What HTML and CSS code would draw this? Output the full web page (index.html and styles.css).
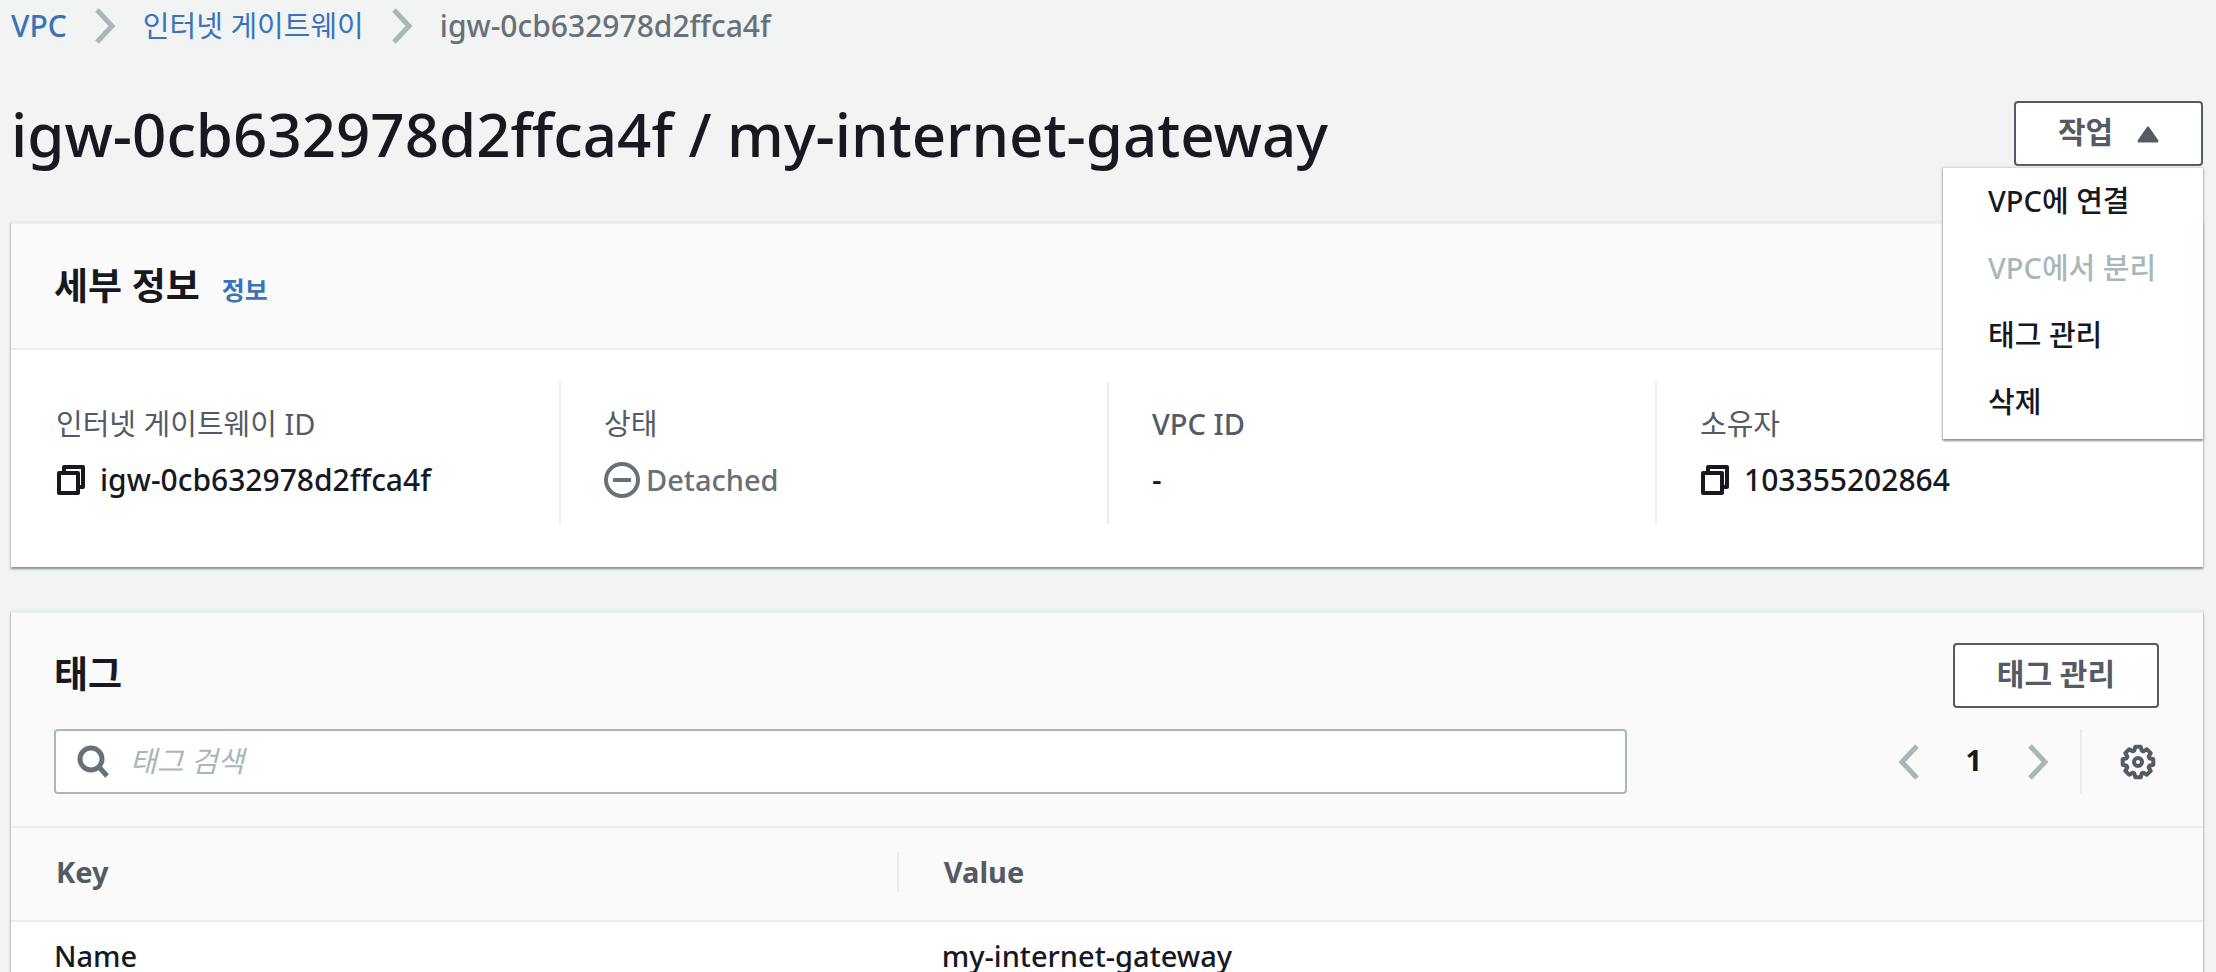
FILE: index.html
```html
<!DOCTYPE html>
<html lang="ko">
<head>
    <meta charset="UTF-8">
    <title>igw-0cb632978d2ffca4f | VPC</title>
    <link rel="stylesheet" href="styles.css">
</head>
<body>
    <nav class="breadcrumb">
        <a class="latin" href="#">VPC</a>
        <svg class="chevron" viewBox="0 0 20 36"><path d="M2 2l15 16-15 16"/></svg>
        <a href="#">인터넷 게이트웨이</a>
        <svg class="chevron" viewBox="0 0 20 36"><path d="M2 2l15 16-15 16"/></svg>
        <span class="latin">igw-0cb632978d2ffca4f</span>
    </nav>

    <header class="page-header">
        <h1>igw-0cb632978d2ffca4f / my-internet-gateway</h1>
        <div class="dropdown">
            <button class="btn" aria-expanded="true">작업
                <svg class="caret" viewBox="0 0 22 17"><path d="M11 2l9 13H2z"/></svg>
            </button>
            <div class="menu">
                <button>VPC에 연결</button>
                <button disabled>VPC에서 분리</button>
                <button>태그 관리</button>
                <button>삭제</button>
            </div>
        </div>
    </header>

    <section class="panel">
        <div class="panel-header">
            <h2>세부 정보</h2>
            <a class="info" href="#">정보</a>
        </div>
        <div class="details">
            <div class="detail">
                <div class="label">인터넷 게이트웨이 ID</div>
                <div class="value">
                    <svg class="copy" viewBox="0 0 30 32"><path d="M8 8V3h19v20h-5M3 9h19v20H3z"/></svg>
                    <span>igw-0cb632978d2ffca4f</span>
                </div>
            </div>
            <div class="detail">
                <div class="label">상태</div>
                <div class="value status">
                    <svg class="detached" viewBox="0 0 36 36"><circle cx="18" cy="18" r="16"/><path d="M9 18h18"/></svg>
                    <span>Detached</span>
                </div>
            </div>
            <div class="detail">
                <div class="label vpc">VPC ID</div>
                <div class="value">-</div>
            </div>
            <div class="detail">
                <div class="label">소유자</div>
                <div class="value">
                    <svg class="copy" viewBox="0 0 30 32"><path d="M8 8V3h19v20h-5M3 9h19v20H3z"/></svg>
                    <span>103355202864</span>
                </div>
            </div>
        </div>
    </section>

    <section class="panel">
        <div class="tags-header">
            <div class="tags-title">
                <h2>태그</h2>
                <button class="btn">태그 관리</button>
            </div>
            <div class="tools">
                <label class="search">
                    <svg viewBox="0 0 32 36"><circle cx="14" cy="15" r="11"/><path d="M22 23l8 9"/></svg>
                    <input type="search" placeholder="태그 검색" aria-label="태그 검색">
                </label>
                <div class="pager">
                    <button class="icon-btn" aria-label="이전" disabled><svg class="chevron" viewBox="0 0 20 36"><path d="M18 2L3 18l15 16"/></svg></button>
                    <span class="page">1</span>
                    <button class="icon-btn" aria-label="다음" disabled><svg class="chevron" viewBox="0 0 20 36"><path d="M2 2l15 16L2 34"/></svg></button>
                </div>
                <button class="icon-btn settings" aria-label="설정">
                    <svg class="gear" viewBox="0 0 36 36">
                        <path d="M15.300 2.700L20.700 2.700 21.700 6.600 23.400 7.300 26.900 5.300 30.700 9.100 28.700 12.600 29.400 14.300 33.300 15.300 33.300 20.700 29.400 21.700 28.700 23.400 30.700 26.900 26.900 30.700 23.400 28.700 21.700 29.400 20.700 33.300 15.300 33.300 14.300 29.400 12.600 28.700 9.100 30.700 5.300 26.900 7.300 23.400 6.600 21.700 2.700 20.700 2.700 15.300 6.600 14.300 7.300 12.600 5.300 9.100 9.100 5.300 12.600 7.300 14.300 6.600z"/>
                        <circle cx="18" cy="18" r="4"/>
                    </svg>
                </button>
            </div>
        </div>
        <table>
            <thead>
                <tr><th class="key"><div>Key</div></th><th>Value</th></tr>
            </thead>
            <tbody>
                <tr><td>Name</td><td>my-internet-gateway</td></tr>
            </tbody>
        </table>
    </section>
</body>
</html>
```

FILE: styles.css
```css
* {
    box-sizing: border-box;
}
body {
    margin: 0;
    padding: 4px 13px 0 11px;
    background: #f2f3f3;
    color: #16191f;
    font-family: "Noto Sans", "Noto Sans CJK KR", sans-serif;
    font-size: 29px;
    line-height: 44px;
    overflow: hidden;
}
h1, h2 {
    margin: 0;
}
a {
    color: #3b73bb;
    text-decoration: none;
}
button, input {
    font: inherit;
    color: inherit;
}
svg {
    fill: none;
    stroke: currentColor;
    flex: none;
}
.latin {
    font-size: 30px;
    font-weight: 500;
}
.breadcrumb {
    display: flex;
    align-items: center;
    gap: 28px;
    color: #687078;
}
.chevron {
    width: 20px;
    height: 36px;
    stroke: #aab7b8;
    stroke-width: 5;
}
.page-header {
    display: flex;
    justify-content: space-between;
    align-items: flex-start;
    padding-top: 53px;
    height: 174px;
}
h1 {
    font-size: 60px;
    font-weight: 500;
    line-height: 66px;
}
.btn {
    height: 65px;
    padding: 0 42px 3px;
    background: #fff;
    border: 2px solid #545b64;
    border-radius: 4px;
    color: #545b64;
    font-size: 30px;
    font-weight: bold;
    line-height: 40px;
}
.caret {
    width: 22px;
    height: 17px;
    margin-left: 16px;
    fill: currentColor;
    stroke-width: 3;
    stroke-linejoin: round;
}
.dropdown {
    position: relative;
}
.menu {
    position: absolute;
    top: 100%;
    right: 0;
    width: 260px;
    margin-top: 2px;
    padding-bottom: 3px;
    background: #fff;
    box-shadow: 0 2px 2px #879596, 0 0 2px 1px #ccd2d2;
}
.menu button {
    display: block;
    width: 100%;
    height: 67px;
    padding: 0 45px 2px;
    border: none;
    background: none;
    text-align: left;
    white-space: nowrap;
    font-weight: 500;
}
.menu button:disabled {
    color: #aab7b8;
}
.panel {
    margin-bottom: 44px;
    background: #fff;
    border-top: 2px solid #eaeded;
    box-shadow: 0 2px 2px #879596, 0 1px 2px 1px #d5dbdb;
}
.panel-header {
    display: flex;
    align-items: baseline;
    gap: 22px;
    padding: 42px 43px 38px;
    background: #fafafa;
    border-bottom: 2px solid #eaeded;
}
h2 {
    font-size: 37px;
    font-weight: bold;
}
.panel-header h2, .info {
    line-height: 40px;
}
.info {
    font-size: 25px;
    font-weight: bold;
}
.details {
    display: grid;
    grid-template-columns: repeat(4, 1fr);
    padding: 32px 0 43px;
}
.detail {
    height: 142px;
    padding: 20px 43px;
    border-left: 2px solid #eaeded;
}
.detail:first-child {
    border-color: transparent;
}
.label {
    height: 56px;
    color: #545b64;
}
.vpc {
    font-weight: 500;
}
.value {
    display: flex;
    align-items: center;
    gap: 14px;
    font-size: 30px;
    font-weight: 500;
}
.status {
    gap: 6px;
    color: #687078;
    font-size: 29px;
}
.copy {
    width: 30px;
    height: 32px;
    stroke-width: 4;
    stroke-linejoin: round;
}
.detached {
    width: 36px;
    height: 36px;
    stroke-width: 4;
}
.tags-header {
    padding: 30px 44px 32px 43px;
    background: #fafafa;
    border-bottom: 2px solid #eaeded;
}
.tags-title {
    display: flex;
    justify-content: space-between;
    margin-bottom: 21px;
}
.tags-title h2 {
    line-height: 62px;
}
.tools {
    display: flex;
    align-items: center;
}
.search {
    display: flex;
    align-items: center;
    flex: 1;
    height: 65px;
    padding-left: 21px;
    gap: 21px;
    background: #fff;
    border: 2px solid #aab7b8;
    border-radius: 4px;
}
.search svg {
    width: 32px;
    height: 36px;
    color: #687078;
    stroke-width: 5;
}
.search input {
    flex: 1;
    padding: 0 0 2px;
    border: none;
    outline: none;
    background: none;
}
.search input::placeholder {
    color: #aab7b8;
    font-style: italic;
    opacity: 1;
}
.pager {
    display: flex;
    align-items: center;
    gap: 46px;
    margin-left: 272px;
    padding-right: 32px;
}
.page {
    font-weight: bold;
    line-height: 48px;
    padding-bottom: 4px;
}
.icon-btn {
    display: flex;
    align-items: center;
    padding: 0;
    border: none;
    background: none;
}
.settings {
    height: 65px;
    padding: 0 3px 0 38px;
    border-left: 2px solid #eaeded;
    color: #545b64;
}
.gear {
    width: 36px;
    height: 36px;
    stroke-width: 4;
    stroke-linejoin: round;
}
table {
    width: 100%;
    table-layout: fixed;
    border-collapse: collapse;
}
th, td {
    padding: 14px 43px 16px;
    text-align: left;
    font-weight: 500;
    line-height: 40px;
}
th {
    padding: 24px 45px 28px;
    background: #fafafa;
    border-bottom: 2px solid #eaeded;
    color: #545b64;
    font-weight: bold;
}
.key {
    width: 40.5%;
    padding-right: 0;
}
.key div {
    border-right: 2px solid #eaeded;
}
```
